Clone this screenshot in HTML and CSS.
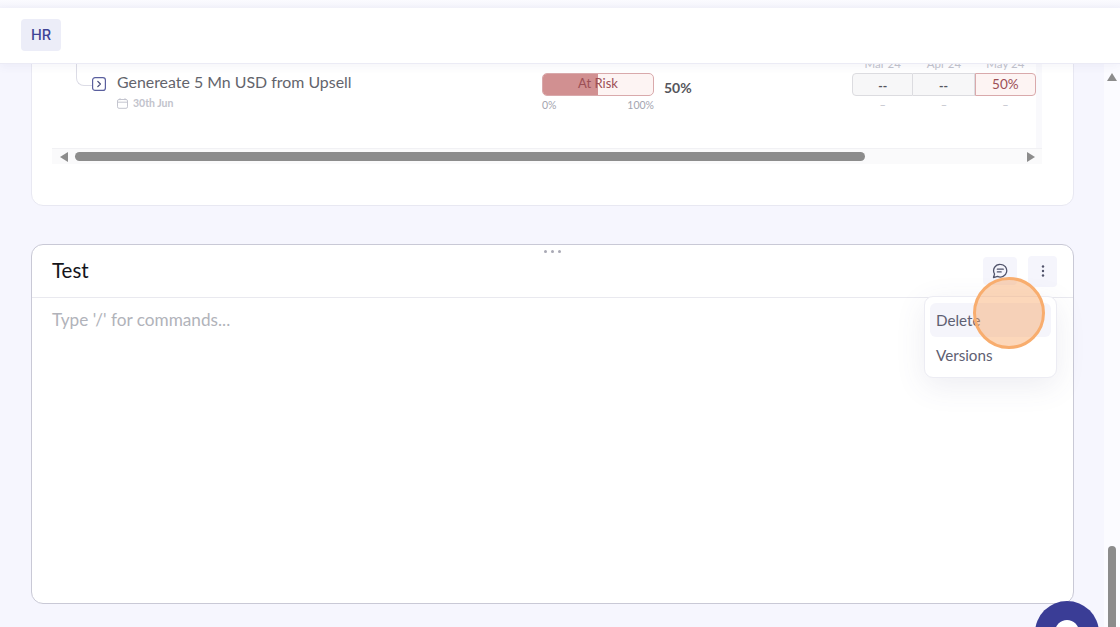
FILE: index.html
```html
<!DOCTYPE html>
<html lang="en">
<head>
    <meta charset="UTF-8">
    <meta name="viewport" content="width=device-width, initial-scale=1.0">
    <title>HR</title>
    <link rel="stylesheet" href="styles.css">
</head>
<body>
    <div class="app">
        <header class="topbar">
            <div class="team-badge">HR</div>
        </header>
        <main class="content">
            <section class="card okr-card">
                <div class="okr-scroll">
                    <div class="okr-row">
                        <div class="tree-line"></div>
                        <div class="okr-name">
                            <div class="okr-title">
                                <svg class="toggle" width="14" height="14" viewBox="0 0 14 14" fill="none">
                                    <rect x="0.6" y="0.6" width="12.8" height="12.8" rx="2.5" stroke="#5a5f9e" stroke-width="1.2"/>
                                    <path d="M5.8 4.4 8.4 7 5.8 9.6" stroke="#4a4f7e" stroke-width="1.3" stroke-linecap="round" stroke-linejoin="round"/>
                                </svg>
                                <span>Genereate 5 Mn USD from Upsell</span>
                            </div>
                            <div class="okr-date">
                                <svg width="11" height="11" viewBox="0 0 11 11" fill="none" stroke="#c4c5cf" stroke-width="1">
                                    <rect x="0.5" y="1.5" width="10" height="8.8" rx="1.5"/>
                                    <path d="M0.5 4.2h10M3 0.2v2M8 0.2v2"/>
                                </svg>
                                <span>30th Jun</span>
                            </div>
                        </div>
                        <div class="progress-cell">
                            <div class="progress">
                                <div class="progress-fill" style="width: 50%"></div>
                                <span class="progress-label">At Risk</span>
                            </div>
                            <div class="progress-scale"><span>0%</span><span>100%</span></div>
                        </div>
                        <div class="progress-value">50%</div>
                        <div class="months">
                            <div class="month">
                                <div class="month-name">Mar 24</div>
                                <div class="month-box first">--</div>
                                <div class="month-note">&ndash;</div>
                            </div>
                            <div class="month">
                                <div class="month-name">Apr 24</div>
                                <div class="month-box">--</div>
                                <div class="month-note">&ndash;</div>
                            </div>
                            <div class="month">
                                <div class="month-name">May 24</div>
                                <div class="month-box risk">50%</div>
                                <div class="month-note">&ndash;</div>
                            </div>
                        </div>
                    </div>
                    <div class="hscroll">
                        <span class="arrow-left"></span>
                        <div class="hscroll-track"><div class="hscroll-thumb"></div></div>
                        <span class="arrow-right"></span>
                    </div>
                </div>
            </section>

            <section class="card note-card">
                <div class="drag-dots"><i></i><i></i><i></i></div>
                <div class="note-head">
                    <h2>Test</h2>
                    <div class="note-actions">
                        <button class="icon-btn comment-btn">
                            <svg width="16" height="16" viewBox="0 0 15 15" fill="none" stroke="#50536a" stroke-width="1.2" stroke-linecap="round" stroke-linejoin="round">
                                <path d="M7.8 1.2a6 6 0 1 1-2.6 11.4L1.4 13.6l1-3.3A6 6 0 0 1 7.8 1.2Z"/>
                                <path d="M5 5.8h5.6M5 8.4h3.6"/>
                            </svg>
                        </button>
                        <button class="icon-btn dots-btn">
                            <svg width="4" height="12" viewBox="0 0 4 12" fill="#50536a">
                                <circle cx="2" cy="1.5" r="1.2"/>
                                <circle cx="2" cy="6" r="1.2"/>
                                <circle cx="2" cy="10.5" r="1.2"/>
                            </svg>
                        </button>
                    </div>
                </div>
                <div class="note-body">Type '/' for commands...</div>
                <div class="menu">
                    <div class="menu-item active">Delete</div>
                    <div class="menu-item">Versions</div>
                </div>
            </section>
        </main>

        <div class="page-scroll">
            <span class="arrow-up"></span>
            <div class="page-thumb"></div>
        </div>
        <div class="chat-bubble"><span></span></div>
        <div class="click-mark"></div>
    </div>
</body>
</html>
```

FILE: styles.css
```css
* {
    box-sizing: border-box;
}
body {
    margin: 0;
    font-family: Lato, "Open Sans", sans-serif;
    background: #f6f6fe;
    color: #5f6068;
}
.app {
    position: relative;
    width: 1120px;
    height: 627px;
    overflow: hidden;
    padding-top: 8px;
    background: linear-gradient(#fbfbff 0, #f3f3fb 8px, #f6f6fe 8px);
}

/* top bar */
.topbar {
    position: relative;
    z-index: 2;
    height: 56px;
    padding: 11px 21px;
    background: #fff;
    border-bottom: 1px solid #ebebf5;
    box-shadow: 0 3px 8px rgba(90, 90, 160, 0.06);
}
.team-badge {
    width: 40px;
    height: 32px;
    border-radius: 4px;
    background: #ecedf8;
    color: #3f4396;
    font-family: Inter, sans-serif;
    font-size: 14.5px;
    font-weight: 500;
    line-height: 32px;
    text-align: center;
}

/* cards */
.content {
    margin-top: -21px;
    padding-left: 31px;
}
.card {
    width: 1043px;
    background: #fff;
    border: 1px solid #e8e8f2;
    border-radius: 12px;
}
.okr-card {
    height: 163px;
    padding: 12px 0 0 20px;
}
.note-card {
    position: relative;
    height: 360px;
    margin-top: 38px;
    border-color: #c9c9d6;
}

/* okr row */
.okr-scroll {
    width: 990px;
}
.okr-row {
    position: relative;
    display: flex;
    height: 92px;
    border-right: 6px solid #f9f9fc;
}
.tree-line {
    width: 16px;
    height: 30px;
    margin: 0 0 0 24px;
    border-left: 1px solid #dcdce6;
    border-bottom: 1px solid #dcdce6;
    border-bottom-left-radius: 8px;
}
.okr-name {
    width: 450px;
    padding-top: 15px;
}
.okr-title {
    display: flex;
    align-items: flex-start;
    gap: 11px;
    font-size: 15.9px;
    line-height: 22px;
    color: #63646c;
}
.toggle {
    margin-top: 6px;
}
.okr-date {
    display: flex;
    align-items: center;
    gap: 5px;
    margin: 4px 0 0 25px;
    font-size: 10.5px;
    font-weight: 700;
    color: #c2c3cc;
}
.progress-cell {
    width: 112px;
    margin-top: 17px;
}
.progress {
    position: relative;
    height: 23px;
    overflow: hidden;
    border: 1px solid #d9a9ab;
    border-radius: 5px;
    background: #fdf4f3;
    text-align: center;
}
.progress-fill {
    position: absolute;
    top: 0;
    left: 0;
    bottom: 0;
    background: #d19091;
}
.progress-label {
    position: relative;
    display: block;
    font-size: 13px;
    line-height: 18px;
    color: #9c4f55;
}
.progress-scale {
    display: flex;
    justify-content: space-between;
    margin-top: 3px;
    font-size: 10.5px;
    color: #a4a5b0;
}
.progress-value {
    width: 198px;
    margin-top: 23px;
    padding-left: 10px;
    font-size: 14px;
    font-weight: 700;
    color: #55565c;
}
.months {
    display: flex;
    width: 184px;
}
.month {
    flex: 1;
    text-align: center;
}
.month-name {
    height: 17px;
    font-size: 11.5px;
    line-height: 15px;
    color: #c2c3cc;
}
.month-box {
    height: 23px;
    border: 1px solid #dcdce0;
    border-left: 0;
    background: #f7f7f8;
    font-size: 12px;
    font-weight: 900;
    line-height: 23px;
    color: #55565c;
}
.month-box.first {
    border-left: 1px solid #dcdce0;
    border-radius: 4px 0 0 4px;
}
.month-box.risk {
    border: 1px solid #d9a9ab;
    border-radius: 0 4px 4px 0;
    background: #fdf4f3;
    font-size: 13.5px;
    font-weight: 400;
    line-height: 21px;
    color: #9c4f55;
}
.month-note {
    margin-top: 2px;
    font-size: 11px;
    color: #c2c3cc;
}

/* horizontal scrollbar */
.hscroll {
    display: flex;
    align-items: center;
    height: 16px;
    padding: 0 7px 0 8px;
    background: #fafafb;
    border-top: 1px solid #f1f1f4;
}
.hscroll-track {
    flex: 1;
    margin: 0 7px;
}
.hscroll-thumb {
    width: 790px;
    height: 9px;
    border-radius: 5px;
    background: #8c8c8c;
}
.arrow-left,
.arrow-right {
    width: 0;
    height: 0;
    border-top: 5px solid transparent;
    border-bottom: 5px solid transparent;
}
.arrow-left {
    border-right: 8px solid #8c8c8c;
}
.arrow-right {
    border-left: 8px solid #8c8c8c;
}

/* note card */
.drag-dots {
    position: absolute;
    top: 5px;
    left: 512px;
    display: flex;
    gap: 4px;
}
.drag-dots i {
    width: 3px;
    height: 3px;
    border-radius: 50%;
    background: #a9a9b5;
}
.note-head {
    display: flex;
    align-items: center;
    justify-content: space-between;
    height: 53px;
    padding: 0 16px 0 20px;
    border-bottom: 1px solid #e9e9ef;
}
.note-head h2 {
    margin: 0 0 2px;
    font-size: 20.5px;
    font-weight: 400;
    color: #15151a;
}
.note-actions {
    display: flex;
    align-items: center;
    gap: 11px;
}
.icon-btn {
    display: flex;
    align-items: center;
    justify-content: center;
    padding: 0;
    border: 0;
    border-radius: 4px;
    background: #f5f5fc;
}
.comment-btn {
    width: 34px;
    height: 28px;
    padding-right: 1px;
}
.dots-btn {
    width: 29px;
    height: 31px;
}
.note-body {
    padding: 12px 20px;
    font-size: 17.2px;
    line-height: 20px;
    color: #b1b3ba;
}
.menu {
    position: absolute;
    top: 51px;
    right: 16px;
    width: 133px;
    height: 82px;
    padding: 6px 5px;
    background: #fff;
    border: 1px solid #ececf3;
    border-radius: 9px;
    box-shadow: 0 8px 30px rgba(80, 80, 130, 0.1);
}
.menu-item {
    height: 34px;
    padding-left: 6px;
    border-radius: 6px;
    font-size: 15.2px;
    line-height: 34px;
    color: #5e6072;
}
.menu-item.active {
    background: #f5f5fb;
    margin-bottom: 1px;
}

/* page scrollbar, chat button, click marker */
.page-scroll {
    position: absolute;
    top: 64px;
    right: 0;
    bottom: 0;
    width: 16px;
    background: #fbfbff;
}
.arrow-up {
    position: absolute;
    top: 9px;
    left: 3px;
    width: 0;
    height: 0;
    border-left: 5px solid transparent;
    border-right: 5px solid transparent;
    border-bottom: 8px solid #8c8c8c;
}
.page-thumb {
    position: absolute;
    top: 482px;
    left: 4px;
    width: 8px;
    height: 90px;
    border-radius: 4px;
    background: #8c8c8c;
}
.chat-bubble {
    position: absolute;
    top: 601px;
    left: 1035px;
    width: 64px;
    height: 64px;
    border-radius: 50%;
    background: #3a3d96;
}
.chat-bubble span {
    position: absolute;
    top: 19px;
    left: 20px;
    width: 24px;
    height: 24px;
    border-radius: 50%;
    background: #fff;
}
.click-mark {
    position: absolute;
    z-index: 3;
    top: 277px;
    left: 973px;
    width: 72px;
    height: 72px;
    border: 3px solid #f8ad6e;
    border-radius: 50%;
    background: rgba(248, 160, 90, 0.42);
}
```
